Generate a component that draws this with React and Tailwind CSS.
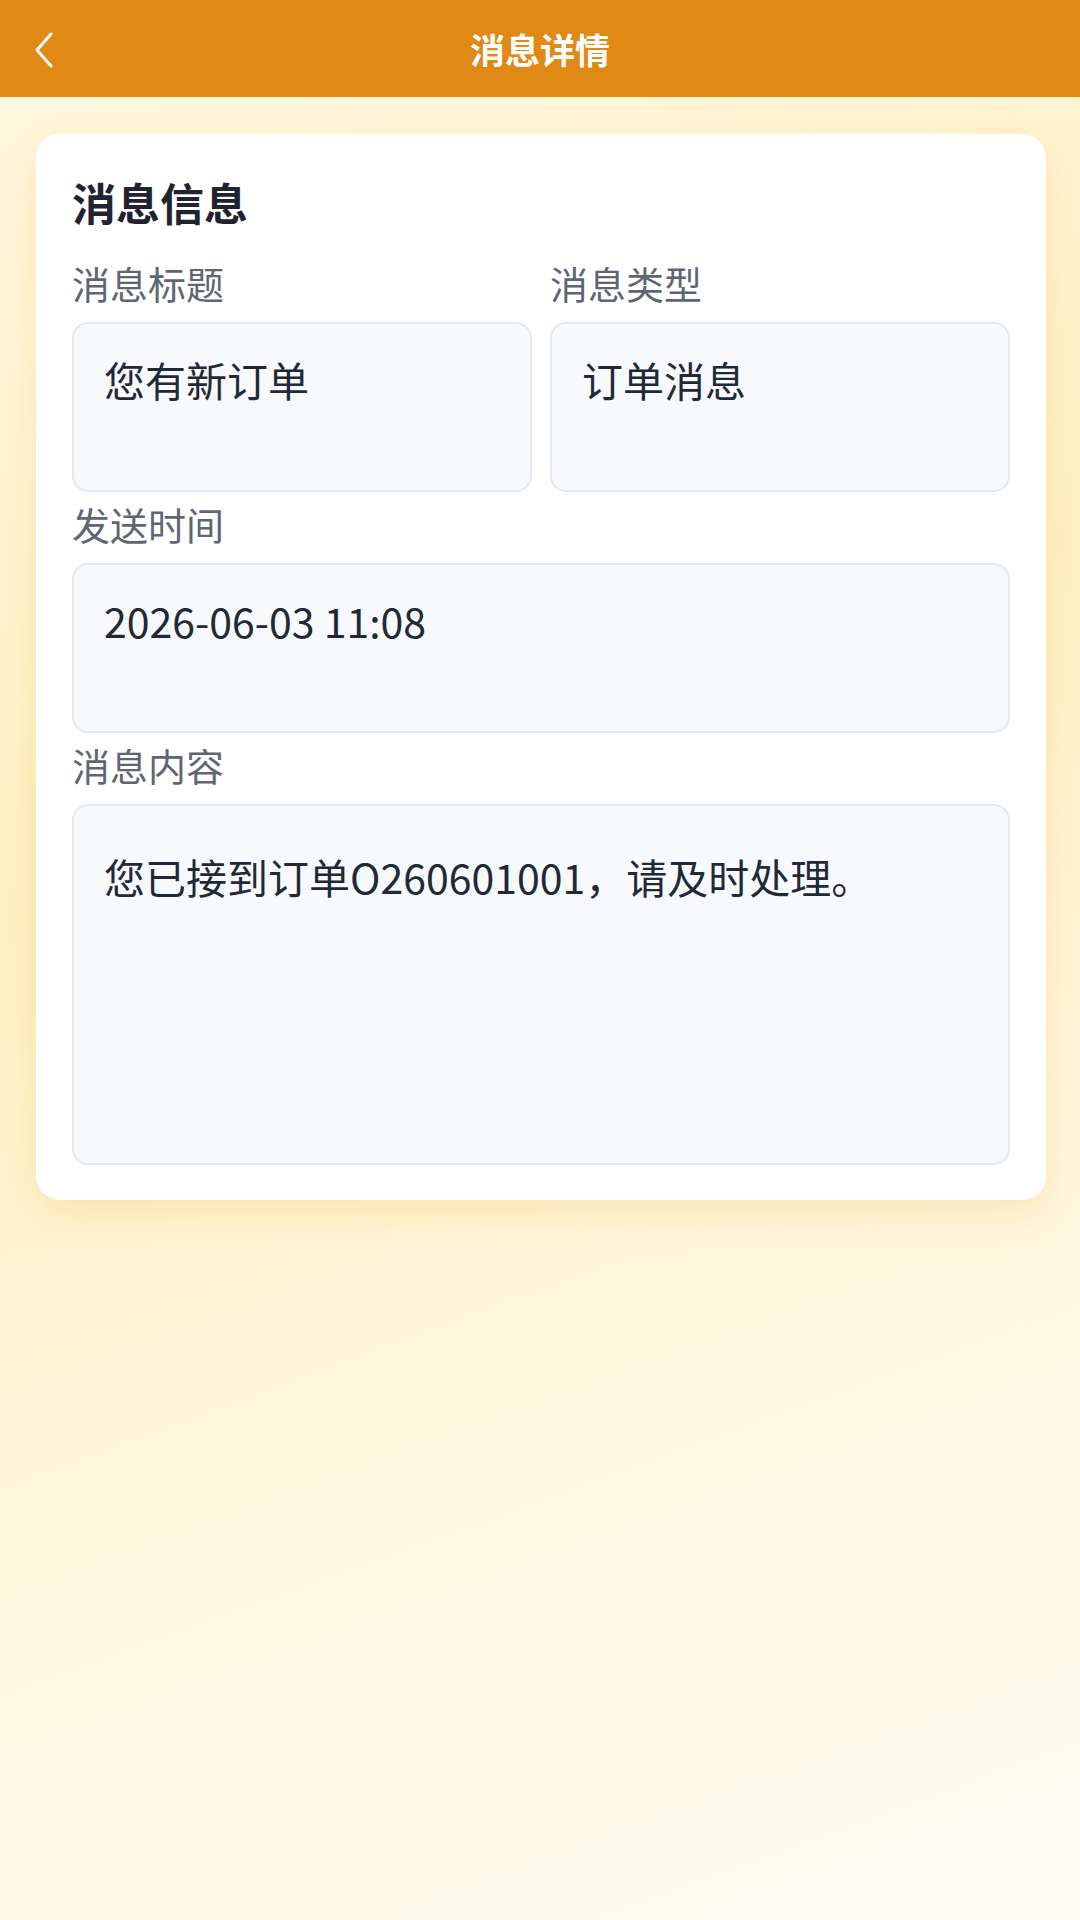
import React from "react";

function Field({ label, value, boxClass = "", textClass = "" }) {
  return (
    <div className="flex flex-col">
      <div className="text-[38px] leading-[55px] text-[#5f6673]">{label}</div>
      <div
        className={
          "mt-3 rounded-[16px] border-2 border-[#e4e9f1] bg-[#f7f9fc] px-[30px] text-[41px] leading-[61px] text-[#1f2937] " +
          boxClass
        }
      >
        <div className={textClass}>{value}</div>
      </div>
    </div>
  );
}

export default function App() {
  return (
    <div
      className="flex min-h-[1920px] w-[1080px] flex-col bg-[linear-gradient(160deg,#fff8e2_0%,#fef0c3_40%,#fff6dc_65%,#fffcf4_100%)]"
      style={{ fontFamily: '"Noto Sans CJK SC", "Noto Sans", sans-serif' }}
    >
      <header className="relative flex h-[97px] items-center justify-center bg-[#e08914]">
        <button className="absolute left-[24px] top-[30px] flex h-[40px] w-[40px] items-center justify-center">
          <svg width="30" height="40" viewBox="0 0 30 40" fill="none">
            <path d="M22 4 L8 20 L22 36" stroke="#ffffff" strokeWidth="3" strokeLinecap="round" strokeLinejoin="round" />
          </svg>
        </button>
        <h1 className="text-[35px] font-bold leading-none text-white">消息详情</h1>
      </header>

      <main className="pl-[36px] pt-[37px]">
        <section className="w-[1010px] rounded-[24px] bg-white px-[36px] pb-[35px] pt-[36px] shadow-[0_14px_36px_rgba(235,190,90,0.28)]">
          <h2 className="text-[44px] font-bold leading-[64px] text-[#1f2430]">消息信息</h2>
          <div className="mt-[21px] flex flex-col gap-[4px]">
            <div className="grid grid-cols-2 gap-[18px]">
              <Field label="消息标题" value="您有新订单" boxClass="h-[170px] pt-[25px]" />
              <Field label="消息类型" value="订单消息" boxClass="h-[170px] pt-[25px]" />
            </div>
            <Field label="发送时间" value="2026-06-03 11:08" boxClass="h-[170px] pt-[25px]" />
            <Field
              label="消息内容"
              value="您已接到订单O260601001，请及时处理。"
              boxClass="h-[361px] pt-[40px]"
            />
          </div>
        </section>
      </main>
    </div>
  );
}
